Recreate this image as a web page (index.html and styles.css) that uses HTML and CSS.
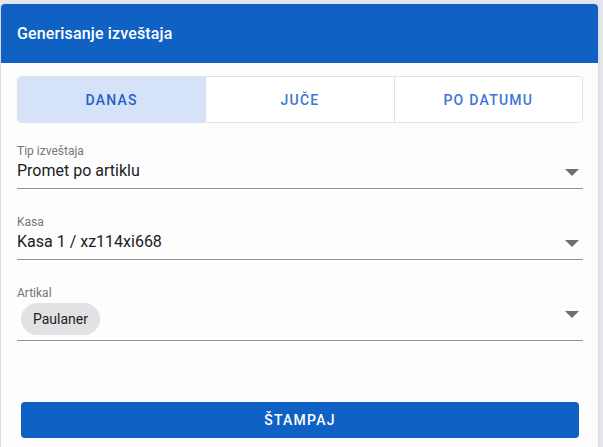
FILE: index.html
```html
<!DOCTYPE html>
<html lang="sr">
<head>
<meta charset="utf-8">
<title>Generisanje izveštaja</title>
<link rel="stylesheet" href="styles.css">
</head>
<body>
<div class="card">
  <div class="card-header">Generisanje izveštaja</div>
  <div class="card-body">
    <div class="tabs">
      <div class="tab active">DANAS</div>
      <div class="tab">JUČE</div>
      <div class="tab">PO DATUMU</div>
    </div>
    <div class="fields">
      <div class="field">
        <div class="label">Tip izveštaja</div>
        <div class="value">Promet po artiklu</div>
        <svg class="arrow" width="14" height="7" viewBox="0 0 14 7"><path d="M0 0H14L7 7Z" fill="#6e6e6e"/></svg>
      </div>
      <div class="field">
        <div class="label">Kasa</div>
        <div class="value">Kasa 1 / xz114xi668</div>
        <svg class="arrow" width="14" height="7" viewBox="0 0 14 7"><path d="M0 0H14L7 7Z" fill="#6e6e6e"/></svg>
      </div>
      <div class="field field-chips">
        <div class="label">Artikal</div>
        <div class="chips"><span class="chip">Paulaner</span></div>
        <svg class="arrow arrow-chips" width="14" height="7" viewBox="0 0 14 7"><path d="M0 0H14L7 7Z" fill="#6e6e6e"/></svg>
      </div>
    </div>
    <button class="print">ŠTAMPAJ</button>
  </div>
</div>
</body>
</html>
```
FILE: styles.css
```css
* { box-sizing: border-box; }
html, body { margin: 0; padding: 0; }
body {
  background: #e5e5f0;
  font-family: Roboto, "Noto Sans", sans-serif;
  overflow: hidden;
  height: 447px;
}
.card {
  margin: 4px 0 0 1px;
  width: 597px;
  height: 460px;
  background: #fdfdfe;
  border-radius: 4px 4px 0 0;
  box-shadow: 0 1px 3px rgba(60, 60, 110, 0.15);
  overflow: hidden;
}
.card-header {
  height: 59px;
  background: #1061c4;
  color: #fff;
  font-size: 16px;
  font-weight: 500;
  display: flex;
  align-items: center;
  padding: 0 16px;
  letter-spacing: 0.15px;
}
.card-body {
  padding: 13px 15px 0 16px;
  display: flex;
  flex-direction: column;
}
.tabs {
  display: flex;
  height: 47px;
  border: 1px solid #e2e2e6;
  border-radius: 4px;
  overflow: hidden;
  background: #fff;
}
.tab {
  flex: 1;
  display: flex;
  align-items: center;
  justify-content: center;
  font-size: 14px;
  font-weight: 500;
  letter-spacing: 1.25px;
  color: #3a78d3;
  border-left: 1px solid #e2e2e6;
}
.tab:first-child { border-left: none; }
.tab.active {
  background: #d5e2f8;
  color: #1f62c4;
}
.fields {
  margin-top: 20px;
  display: flex;
  flex-direction: column;
  gap: 25px;
}
.field {
  position: relative;
  border-bottom: 1px solid #949494;
  padding-bottom: 5px;
}
.label {
  font-size: 12px;
  line-height: 16px;
  color: #767676;
}
.value {
  font-size: 16px;
  line-height: 24px;
  color: #212121;
}
.chips {
  margin-top: 2px;
  padding-left: 4px;
  display: flex;
}
.chip {
  height: 32px;
  display: flex;
  align-items: center;
  padding: 0 12px;
  border-radius: 16px;
  background: #e2e1e4;
  color: #212121;
  font-size: 14px;
}
.arrow {
  position: absolute;
  right: 4px;
  bottom: 12px;
}
.arrow-chips {
  bottom: 22px;
}
.print {
  margin: 61px 4px 0 4px;
  height: 36px;
  border: none;
  border-radius: 4px;
  background: #1061c4;
  color: #fff;
  font-family: Roboto, "Noto Sans", sans-serif;
  font-size: 14px;
  font-weight: 500;
  letter-spacing: 1.25px;
}
```
